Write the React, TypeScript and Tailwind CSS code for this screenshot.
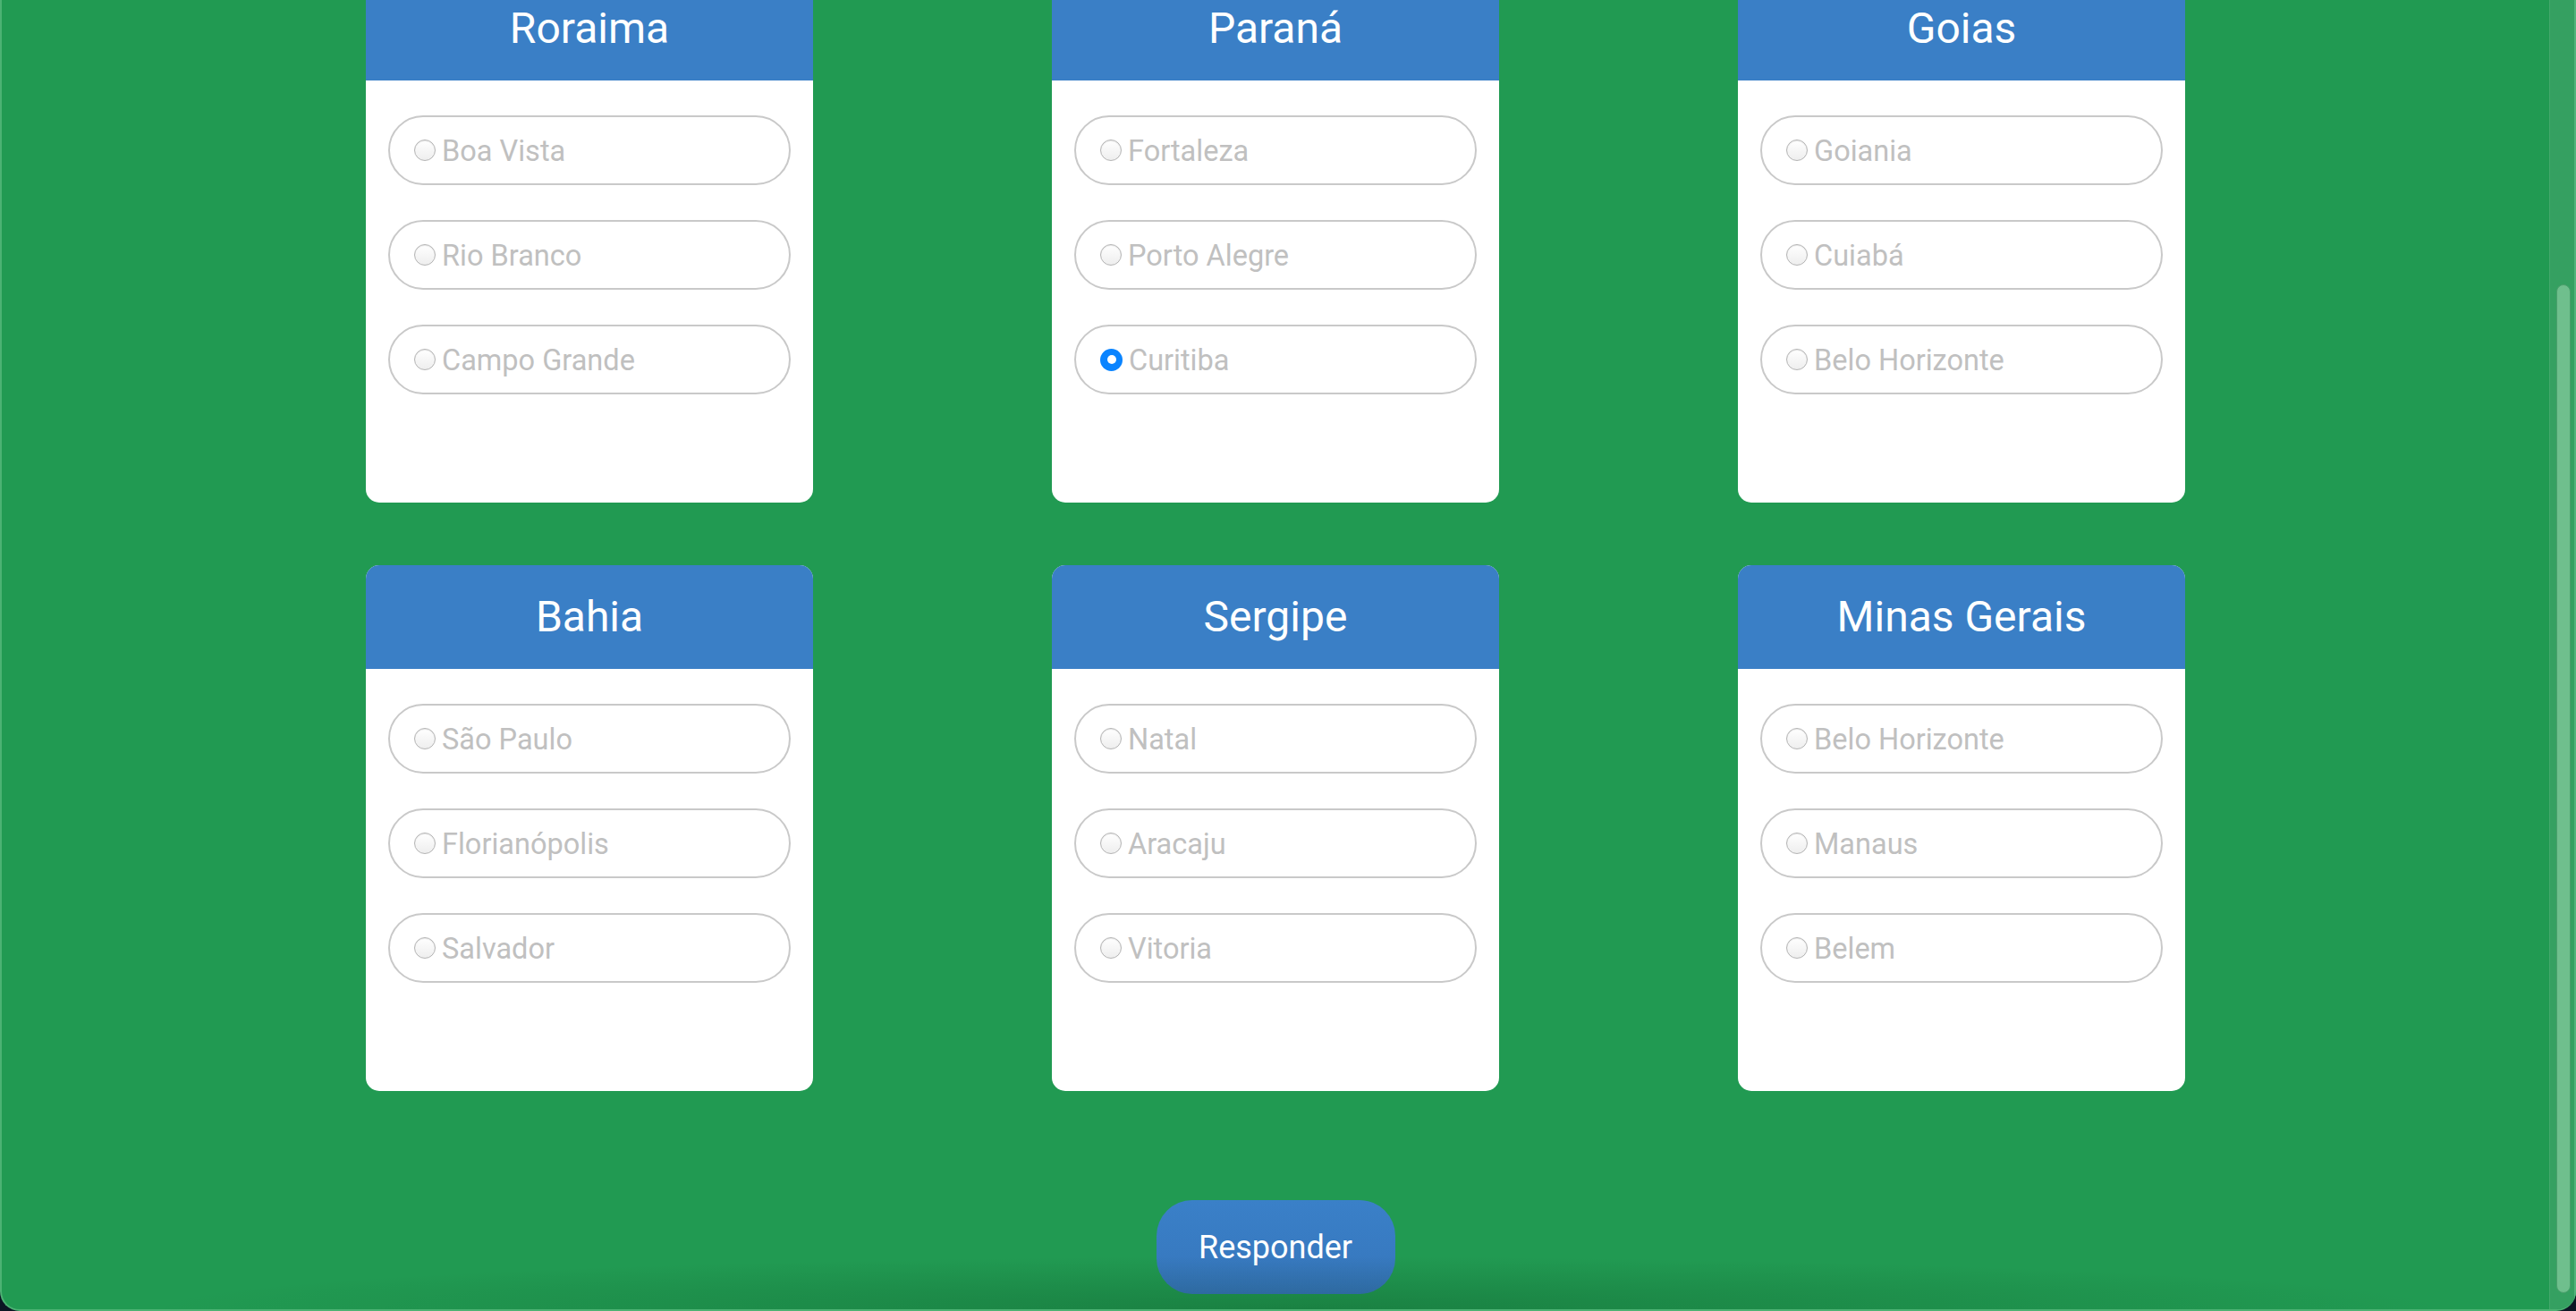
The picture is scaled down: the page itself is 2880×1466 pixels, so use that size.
import React from "react";

type Card = { title: string; options: string[]; checked?: number };

const cards: Card[] = [
  { title: "Roraima", options: ["Boa Vista", "Rio Branco", "Campo Grande"] },
  { title: "Paraná", options: ["Fortaleza", "Porto Alegre", "Curitiba"], checked: 2 },
  { title: "Goias", options: ["Goiania", "Cuiabá", "Belo Horizonte"] },
  { title: "Bahia", options: ["São Paulo", "Florianópolis", "Salvador"] },
  { title: "Sergipe", options: ["Natal", "Aracaju", "Vitoria"] },
  { title: "Minas Gerais", options: ["Belo Horizonte", "Manaus", "Belem"] },
];

function Radio({ checked }: { checked: boolean }) {
  if (checked) {
    return (
      <span className="flex h-[25px] w-[25px] shrink-0 items-center justify-center rounded-full bg-[#0a84ff]">
        <span className="h-[10px] w-[10px] rounded-full bg-white" />
      </span>
    );
  }
  return (
    <span className="h-[24px] w-[24px] shrink-0 rounded-full border border-[#b4b4b4] bg-gradient-to-b from-[#ffffff] to-[#eeeeee] shadow-[inset_0_1px_1px_rgba(0,0,0,0.1)]" />
  );
}

function QuizCard({ card }: { card: Card }) {
  return (
    <div className="flex h-[588px] w-[500px] flex-col overflow-hidden rounded-[15px] bg-white">
      <div className="flex h-[116px] items-center justify-center bg-[#3a7fc6]">
        <span className="text-[48px] leading-none text-white">{card.title}</span>
      </div>
      <div className="flex flex-col gap-[39px] px-[25px] pt-[39px]">
        {card.options.map((opt, i) => (
          <label
            key={opt}
            className="flex h-[78px] items-center gap-[7px] rounded-full border-2 border-[#c9c9c9] pl-[27px]"
          >
            <Radio checked={card.checked === i} />
            <span className="pt-[2px] text-[32.5px] leading-none text-[#c0c0c0]">{opt}</span>
          </label>
        ))}
      </div>
    </div>
  );
}

export default function App() {
  return (
    <div
      className="relative h-[1466px] w-[2880px] overflow-hidden bg-[#0b1624]"
      style={{ fontFamily: "Roboto, 'Liberation Sans', sans-serif" }}
    >
      <div className="relative flex h-full w-full overflow-hidden rounded-b-[22px] border-l-2 border-b-2 border-[#4cb273] bg-[#219a52]">
        <div className="flex flex-1 flex-col items-center">
          <div className="mt-[-26px] grid grid-cols-[500px_500px_500px] gap-x-[267px] gap-y-[70px]">
            {cards.map((c) => (
              <QuizCard key={c.title} card={c} />
            ))}
          </div>
          <button className="mt-[122px] flex h-[105px] w-[267px] items-center justify-center rounded-[40px] bg-gradient-to-b from-[#3a80c8] to-[#3676bc] text-[36px] text-white">
            Responder
          </button>
        </div>
        <div className="relative z-10 w-[30px] shrink-0 border-l border-[#44a86c] bg-[#35a061]">
          <div className="absolute left-[7px] top-[318px] h-[1128px] w-[16px] rounded-full border border-[#4a9f6c] bg-[#6fbf8d]" />
          <div className="absolute right-0 top-0 h-full w-[2px] bg-[#52b47a]" />
        </div>
        <div className="pointer-events-none absolute bottom-0 left-[150px] h-[60px] w-[2600px] bg-[radial-gradient(ellipse_at_bottom,rgba(0,40,10,0.22),rgba(0,0,0,0)_70%)]" />
      </div>
    </div>
  );
}
